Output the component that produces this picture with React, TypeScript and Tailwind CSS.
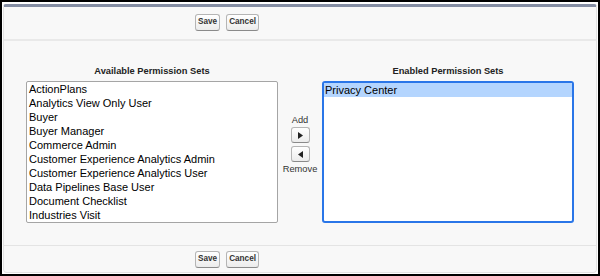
const available = [
  'ActionPlans',
  'Analytics View Only User',
  'Buyer',
  'Buyer Manager',
  'Commerce Admin',
  'Customer Experience Analytics Admin',
  'Customer Experience Analytics User',
  'Data Pipelines Base User',
  'Document Checklist',
  'Industries Visit',
];

const enabled = ['Privacy Center'];

function Btn({ label }: { label: string }) {
  return (
    <button className="h-[17px] px-[2px] rounded-[3px] border border-[#b5b5b5] border-b-[#8a8a8a] bg-gradient-to-b from-white to-[#ececec] text-[8.2px] font-bold text-[#333] leading-none">
      {label}
    </button>
  );
}

function ButtonRow() {
  return (
    <div className="flex gap-[6px] pl-[191px]">
      <Btn label="Save" />
      <Btn label="Cancel" />
    </div>
  );
}

function Arrow({ dir }: { dir: 'left' | 'right' }) {
  return (
    <button className="w-[19px] h-[16px] flex items-center justify-center rounded-[3px] border border-[#b5b5b5] border-b-[#8a8a8a] bg-gradient-to-b from-white to-[#ececec]">
      <svg width="5" height="7" viewBox="0 0 5 7">
        {dir === 'right' ? <path d="M0 0 L5 3.5 L0 7 Z" fill="#222" /> : <path d="M5 0 L0 3.5 L5 7 Z" fill="#222" />}
      </svg>
    </button>
  );
}

export default function App() {
  return (
    <div className="w-[600px] h-[276px] border-2 border-black bg-white px-[1px] pt-[2px] pb-[1px] font-['Liberation_Sans',Arial,sans-serif]">
      <div className="h-full flex flex-col bg-[#f8f8f8] border-t-[3px] border-t-[#848da3] border-x border-b border-x-[#e2e2e2] border-b-[#e2e2e2] rounded-t-[3px] rounded-b-[4px]">
        <div className="pt-[7px] pb-[8px] border-b-2 border-[#e9e9e9]">
          <ButtonRow />
        </div>

        <div className="flex px-[22px] pt-[24px] pb-[22px] border-b border-[#e4e4e4]">
          <div className="w-[252px] flex flex-col">
            <div className="h-[12px] mb-[4px] text-center text-[9.3px] font-bold leading-[12px] text-[#222]">
              Available Permission Sets
            </div>
            <div className="h-[142px] bg-white border border-[#a5a5a5] rounded-[2px] overflow-hidden">
              {available.map((a) => (
                <div key={a} className="h-[14px] px-[2px] text-[11px] leading-[14px] text-black whitespace-nowrap">
                  {a}
                </div>
              ))}
            </div>
          </div>

          <div className="w-[44px] flex flex-col items-center pt-[50px] text-[9.3px] text-[#333] leading-[11px]">
            <span className="mb-[1px]">Add</span>
            <Arrow dir="right" />
            <div className="h-[3px]" />
            <Arrow dir="left" />
            <span className="mt-[2px]">Remove</span>
          </div>

          <div className="w-[252px] flex flex-col">
            <div className="h-[12px] mb-[4px] text-center text-[9.3px] font-bold leading-[12px] text-[#222]">
              Enabled Permission Sets
            </div>
            <div className="h-[142px] bg-white border-2 border-[#2a76e8] rounded-[3px] overflow-hidden">
              {enabled.map((e) => (
                <div key={e} className="h-[14px] px-[1px] bg-[#b4d5fe] text-[11px] leading-[14px] text-black whitespace-nowrap">
                  {e}
                </div>
              ))}
            </div>
          </div>
        </div>

        <div className="pt-[5px]">
          <ButtonRow />
        </div>
      </div>
    </div>
  );
}
